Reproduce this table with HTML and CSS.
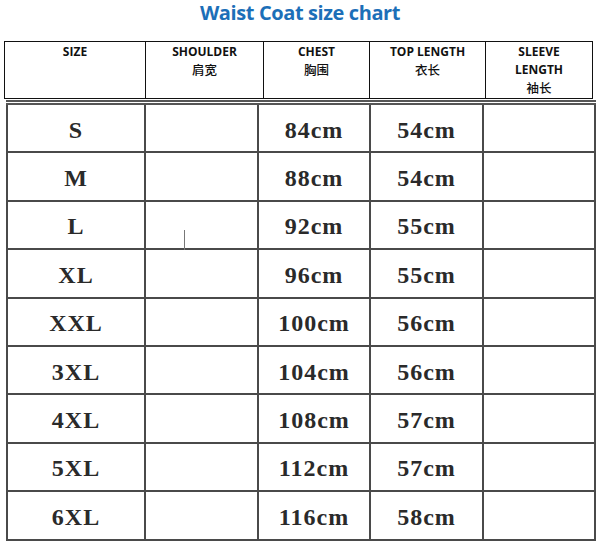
FILE: index.html
```html
<!DOCTYPE html>
<html>
<head>
<meta charset="utf-8">
<link rel="stylesheet" href="styles.css">
</head>
<body>
<div class="page">
  <h1 class="title">Waist Coat size chart</h1>
  <table class="head">
    <colgroup>
      <col class="h1"><col class="h2"><col class="h3"><col class="h4"><col class="h5">
    </colgroup>
    <tr>
      <th>SIZE</th>
      <th>SHOULDER<br><span class="cn">肩宽</span></th>
      <th>CHEST<br><span class="cn">胸围</span></th>
      <th>TOP LENGTH<br><span class="cn">衣长</span></th>
      <th>SLEEVE<br>LENGTH<br><span class="cn">袖长</span></th>
    </tr>
  </table>
  <table class="body">
    <colgroup>
      <col class="b1"><col class="b2"><col class="b3"><col class="b4"><col class="b5">
    </colgroup>
    <tr><td>S</td><td></td><td>84cm</td><td>54cm</td><td></td></tr>
    <tr><td>M</td><td></td><td>88cm</td><td>54cm</td><td></td></tr>
    <tr><td>L</td><td class="cursor-cell"><span class="cursor"></span></td><td>92cm</td><td>55cm</td><td></td></tr>
    <tr><td>XL</td><td></td><td>96cm</td><td>55cm</td><td></td></tr>
    <tr><td>XXL</td><td></td><td>100cm</td><td>56cm</td><td></td></tr>
    <tr><td>3XL</td><td></td><td>104cm</td><td>56cm</td><td></td></tr>
    <tr><td>4XL</td><td></td><td>108cm</td><td>57cm</td><td></td></tr>
    <tr><td>5XL</td><td></td><td>112cm</td><td>57cm</td><td></td></tr>
    <tr><td>6XL</td><td></td><td>116cm</td><td>58cm</td><td></td></tr>
  </table>
</div>
</body>
</html>
```
FILE: styles.css
```css
html, body {
  margin: 0;
  padding: 0;
  background: #fff;
}
.page {
  width: 600px;
  height: 550px;
  overflow: hidden;
}
.title {
  margin: 0;
  height: 41px;
  box-sizing: border-box;
  text-align: center;
  font-family: "Open Sans", sans-serif;
  font-weight: 700;
  font-size: 20px;
  line-height: 26px;
  letter-spacing: -0.4px;
  color: #1c6fb8;
}
.head {
  margin-left: 4px;
  width: 588px;
  border-collapse: collapse;
  table-layout: fixed;
}
.h1 { width: 141px; }
.h2 { width: 118px; }
.h3 { width: 106px; }
.h4 { width: 116px; }
.h5 { width: 107px; }
.head th {
  border: 1px solid #111;
  height: 48px;
  padding: 1px 0 0;
  vertical-align: top;
  font-family: "Open Sans", sans-serif;
  font-weight: 700;
  font-size: 12px;
  line-height: 18px;
  color: #111;
}
.cn {
  font-family: "Noto Sans CJK SC", sans-serif;
  font-weight: 500;
  font-size: 12.5px;
}
.body {
  margin-top: 1px;
  margin-left: 6px;
  width: 588px;
  border-collapse: collapse;
  table-layout: fixed;
}
.b1 { width: 138px; }
.b2 { width: 113px; }
.b3 { width: 112px; }
.b4 { width: 113px; }
.b5 { width: 112px; }
.body td {
  border: 2px solid #4a4a4a;
  height: 42.4px;
  padding: 4px 0 0;
  text-align: center;
  vertical-align: middle;
  font-family: "Liberation Serif", serif;
  font-weight: 700;
  font-size: 24px;
  letter-spacing: 1px;
  color: #2a2a2a;
}
.body tr:first-child td {
  border-top: 5px double #555;
}
.cursor-cell {
  position: relative;
}
.cursor {
  position: absolute;
  left: 38px;
  top: 28px;
  width: 1px;
  height: 20px;
  background: #777;
}
```
